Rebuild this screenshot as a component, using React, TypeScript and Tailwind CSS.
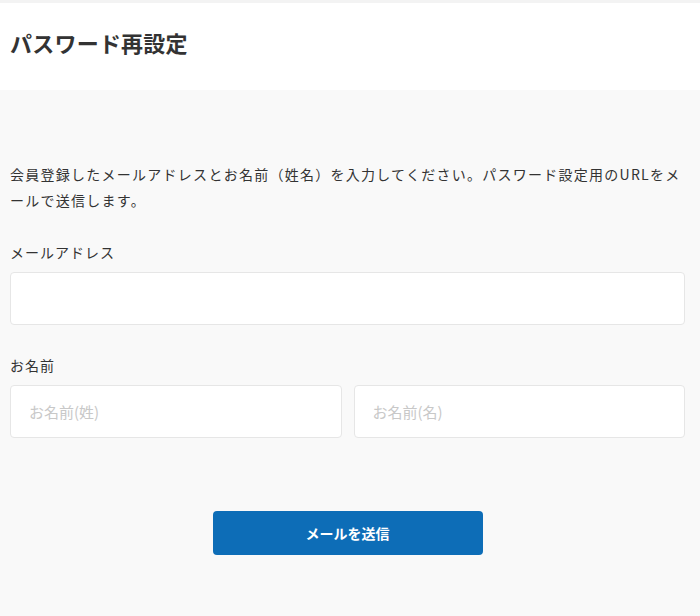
import React from 'react';

const font = { fontFamily: '"Noto Sans CJK JP", "Noto Sans", sans-serif' };

export default function App() {
  return (
    <div className="min-h-[616px] bg-[#f9f9f9] text-[#333]" style={font}>
      {/* Header */}
      <div className="border-t-[3px] border-[#f3f3f3] bg-white h-[90px] pt-[23px] pl-[10px]">
        <h1 className="text-[22px] font-bold leading-[32px] tracking-[0.01em] text-[#333]">パスワード再設定</h1>
      </div>

      {/* Body */}
      <div className="pl-[10px] pr-[15px] pt-[71px] pb-[61px]">
        <p className="text-[14px] leading-[26px] tracking-[0.09em]">
          会員登録したメールアドレスとお名前（姓名）を入力してください。パスワード設定用のURLをメールで送信します。
        </p>

        <label className="block mt-[29px] text-[14px] leading-[20px] tracking-[0.07em]">メールアドレス</label>
        <input
          type="email"
          className="mt-[10px] block w-full h-[53px] bg-white border border-[#e6e6e6] rounded-[4px] px-[18px] text-[15px] outline-none"
        />

        <label className="block mt-[30px] text-[14px] leading-[20px] tracking-[0.07em]">お名前</label>
        <div className="mt-[10px] grid grid-cols-2 gap-[12px]">
          <input
            type="text"
            placeholder="お名前(姓)"
            className="block w-full h-[53px] bg-white border border-[#e6e6e6] rounded-[4px] px-[18px] text-[15px] outline-none placeholder:text-[#c8c8c8]"
          />
          <input
            type="text"
            placeholder="お名前(名)"
            className="block w-full h-[53px] bg-white border border-[#e6e6e6] rounded-[4px] px-[18px] text-[15px] outline-none placeholder:text-[#c8c8c8]"
          />
        </div>

        <div className="mt-[73px] flex justify-center">
          <button className="w-[270px] h-[44px] rounded-[4px] bg-[#0d6db7] text-white text-[14px] font-bold">
            メールを送信
          </button>
        </div>
      </div>
    </div>
  );
}
